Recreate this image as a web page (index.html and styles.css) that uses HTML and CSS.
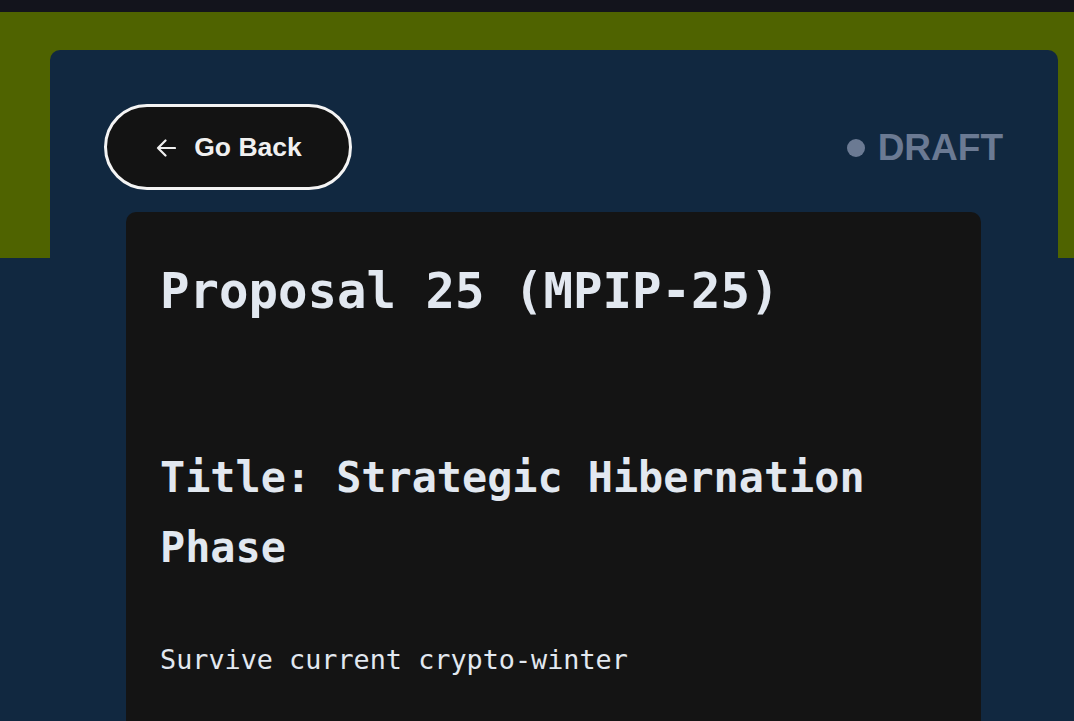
FILE: index.html
```html
<!DOCTYPE html>
<html lang="en">
<head>
<meta charset="utf-8">
<title>Proposal 25 (MPIP-25)</title>
<link rel="stylesheet" href="styles.css">
</head>
<body>
<div class="topbar"></div>
<main class="stage">
  <section class="panel">
    <div class="panel-head">
      <button class="back-btn" type="button">
        <svg class="back-icon" viewBox="0 0 20 18" width="20" height="18" aria-hidden="true">
          <path d="M19 9H2M9.5 1.5L2 9l7.5 7.5" fill="none" stroke="#f0f0f0" stroke-width="2.2" stroke-linecap="round" stroke-linejoin="round"/>
        </svg>
        <span>Go Back</span>
      </button>
      <div class="status"><span class="status-dot"></span><span>DRAFT</span></div>
    </div>
    <article class="doc">
      <h1 class="doc-title">Proposal 25 (MPIP-25)</h1>
      <h2 class="doc-subtitle">Title: Strategic Hibernation Phase</h2>
      <p class="doc-text">Survive current crypto-winter</p>
    </article>
  </section>
</main>
</body>
</html>
```

FILE: styles.css
```css
html, body {
  margin: 0;
  padding: 0;
  background: #112840;
  overflow: hidden;
}

body {
  font-family: "DejaVu Sans Mono", "Liberation Mono", monospace;
  color: #e2e8f0;
}

.topbar {
  height: 12px;
  background: #13141c;
}

.stage {
  background: linear-gradient(to bottom, #4f6300 0, #4f6300 246px, #112840 246px);
  padding: 38px 16px 0 50px;
  min-height: 800px;
}

.panel {
  background: #112840;
  border-radius: 10px 10px 0 0;
  padding: 54px 54px 0 54px;
  min-height: 800px;
}

.panel-head {
  display: flex;
  align-items: center;
  justify-content: space-between;
}

.back-btn {
  display: flex;
  align-items: center;
  justify-content: center;
  gap: 18px;
  width: 248px;
  height: 86px;
  box-sizing: border-box;
  border: 3px solid #f4f4f4;
  border-radius: 43px;
  background: #131313;
  color: #f0f0f0;
  font-family: "Liberation Sans", Arial, sans-serif;
  font-weight: 700;
  font-size: 26.5px;
  padding: 0 0 0 2px;
  cursor: pointer;
}

.back-icon {
  display: block;
  margin-top: 1px;
}

.status {
  display: flex;
  align-items: center;
  gap: 13px;
  color: #6b7a93;
  font-family: "Liberation Sans", Arial, sans-serif;
  font-weight: 700;
  font-size: 37px;
  margin: 2px 1px 0 0;
}

.status-dot {
  width: 18px;
  height: 18px;
  border-radius: 50%;
  background: #6b7a93;
}

.doc {
  margin: 22px 23px 0 22px;
  background: #141414;
  border-radius: 10px 10px 0 0;
  padding: 50px 34px 40px 34px;
  min-height: 600px;
}

.doc-title {
  margin: 0;
  font-size: 49px;
  line-height: 60px;
  font-weight: 700;
  letter-spacing: 0;
}

.doc-subtitle {
  margin: 121px 0 0 0;
  font-size: 41.8px;
  line-height: 70px;
  font-weight: 700;
  max-width: 760px;
}

.doc-text {
  margin: 55px 0 0 0;
  font-size: 26.8px;
  line-height: 43px;
  font-weight: 400;
}
```
